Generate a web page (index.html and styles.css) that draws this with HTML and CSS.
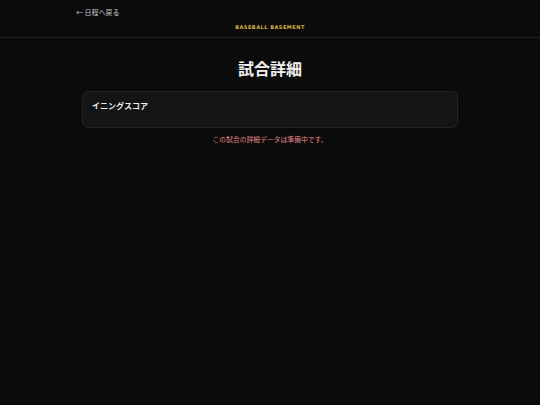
FILE: index.html
```html
<!DOCTYPE html>
<html lang="ja">
<head>
<meta charset="utf-8">
<link rel="stylesheet" href="styles.css">
</head>
<body>
<header class="site-header">
  <div class="header-inner">
    <a class="back-link" href="#">← 日程へ戻る</a>
    <div class="brand">BASEBALL BASEMENT</div>
  </div>
</header>
<main class="main">
  <h1 class="title">試合詳細</h1>
  <section class="card">
    <h2 class="card-title">イニングスコア</h2>
  </section>
  <p class="notice">この試合の詳細データは準備中です。</p>
</main>
</body>
</html>
```
FILE: styles.css
```css
html, body {
  margin: 0;
  padding: 0;
  background: #0b0b0b;
  font-family: "Noto Sans CJK JP", "Noto Sans", sans-serif;
  color: #e8e8e8;
}
.site-header {
  border-bottom: 1px solid #1f1f1f;
}
.header-inner {
  width: 388px;
  margin: 0 auto;
  padding: 6px 0 6px;
  display: flex;
  flex-direction: column;
}
.back-link {
  color: #c8c8c8;
  text-decoration: none;
  font-size: 7px;
  line-height: 12px;
}
.brand {
  text-align: center;
  color: #d8b548;
  font-family: "DejaVu Sans", sans-serif;
  font-weight: bold;
  font-size: 5px;
  letter-spacing: 0.5px;
  line-height: 8px;
  margin-top: 5px;
}
.main {
  width: 376px;
  margin: 0 auto;
  padding-top: 18px;
}
.title {
  margin: 0;
  text-align: center;
  font-size: 16px;
  line-height: 24px;
  font-weight: bold;
  color: #f0f0f0;
}
.card {
  margin-top: 11px;
  background: #141414;
  border: 1px solid #232323;
  border-radius: 6px;
  height: 35px;
  padding: 0 9px;
}
.card-title {
  margin: 8px 0 0;
  font-size: 8px;
  line-height: 12px;
  font-weight: bold;
  color: #efefef;
}
.notice {
  margin: 6px 0 0;
  text-align: center;
  font-size: 6.8px;
  line-height: 10px;
  color: #e08787;
}
```
